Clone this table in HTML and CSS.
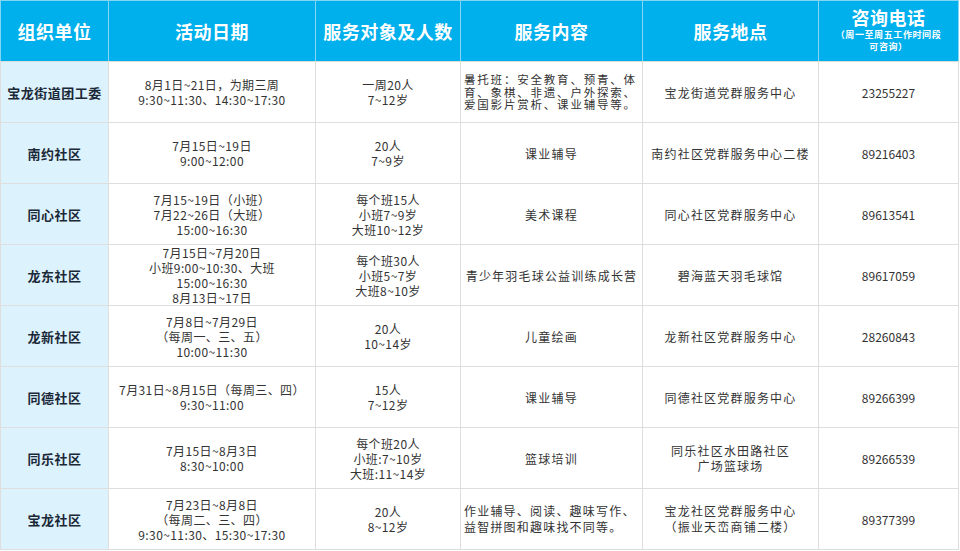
FILE: index.html
```html
<!DOCTYPE html>
<html lang="zh-CN">
<head>
<meta charset="utf-8">
<title>暑期活动</title>
<link rel="stylesheet" href="styles.css">
</head>
<body>
<table class="sched">
  <colgroup>
    <col class="c1"><col class="c2"><col class="c3"><col class="c4"><col class="c5"><col class="c6">
  </colgroup>
  <thead>
    <tr>
      <th>组织单位</th>
      <th>活动日期</th>
      <th>服务对象及人数</th>
      <th>服务内容</th>
      <th>服务地点</th>
      <th class="phone-h"><span class="ph-title">咨询电话</span><span class="ph-sub">（周一至周五工作时间段</span><span class="ph-sub">可咨询）</span></th>
    </tr>
  </thead>
  <tbody>
    <tr>
      <td class="org">宝龙街道团工委</td>
      <td class="dt"><span class="ln">8月1日~21日，为期三周</span><span class="ln">9:30~11:30、14:30~17:30</span></td>
      <td class="dt"><span class="ln">一周20人</span><span class="ln">7~12岁</span></td>
      <td class="left tight"><span class="ln">暑托班：安全教育、预青、体</span><span class="ln">育、象棋、非遗、户外探索、</span><span class="ln">爱国影片赏析、课业辅导等。</span></td>
      <td class="sp">宝龙街道党群服务中心</td>
      <td>23255227</td>
    </tr>
    <tr>
      <td class="org">南约社区</td>
      <td class="dt"><span class="ln">7月15日~19日</span><span class="ln">9:00~12:00</span></td>
      <td class="dt"><span class="ln">20人</span><span class="ln">7~9岁</span></td>
      <td class="sp">课业辅导</td>
      <td class="sp">南约社区党群服务中心二楼</td>
      <td>89216403</td>
    </tr>
    <tr>
      <td class="org">同心社区</td>
      <td class="dt"><span class="ln">7月15~19日（小班）</span><span class="ln">7月22~26日（大班）</span><span class="ln">15:00~16:30</span></td>
      <td class="dt"><span class="ln">每个班15人</span><span class="ln">小班7~9岁</span><span class="ln">大班10~12岁</span></td>
      <td class="sp">美术课程</td>
      <td class="sp">同心社区党群服务中心</td>
      <td>89613541</td>
    </tr>
    <tr>
      <td class="org">龙东社区</td>
      <td class="dt"><span class="ln">7月15日~7月20日</span><span class="ln">小班9:00~10:30、大班</span><span class="ln">15:00~16:30</span><span class="ln">8月13日~17日</span></td>
      <td class="dt"><span class="ln">每个班30人</span><span class="ln">小班5~7岁</span><span class="ln">大班8~10岁</span></td>
      <td class="sp">青少年羽毛球公益训练成长营</td>
      <td class="sp">碧海蓝天羽毛球馆</td>
      <td>89617059</td>
    </tr>
    <tr>
      <td class="org">龙新社区</td>
      <td class="dt"><span class="ln">7月8日~7月29日</span><span class="ln">（每周一、三、五）</span><span class="ln">10:00~11:30</span></td>
      <td class="dt"><span class="ln">20人</span><span class="ln">10~14岁</span></td>
      <td class="sp">儿童绘画</td>
      <td class="sp">龙新社区党群服务中心</td>
      <td>28260843</td>
    </tr>
    <tr>
      <td class="org">同德社区</td>
      <td class="dt"><span class="ln">7月31日~8月15日（每周三、四）</span><span class="ln">9:30~11:00</span></td>
      <td class="dt"><span class="ln">15人</span><span class="ln">7~12岁</span></td>
      <td class="sp">课业辅导</td>
      <td class="sp">同德社区党群服务中心</td>
      <td>89266399</td>
    </tr>
    <tr>
      <td class="org">同乐社区</td>
      <td class="dt"><span class="ln">7月15日~8月3日</span><span class="ln">8:30~10:00</span></td>
      <td class="dt"><span class="ln">每个班20人</span><span class="ln">小班:7~10岁</span><span class="ln">大班:11~14岁</span></td>
      <td class="sp">篮球培训</td>
      <td class="sp"><span class="ln">同乐社区水田路社区</span><span class="ln">广场篮球场</span></td>
      <td>89266539</td>
    </tr>
    <tr>
      <td class="org">宝龙社区</td>
      <td class="dt"><span class="ln">7月23日~8月8日</span><span class="ln">（每周二、三、四）</span><span class="ln">9:30~11:30、15:30~17:30</span></td>
      <td class="dt"><span class="ln">20人</span><span class="ln">8~12岁</span></td>
      <td class="left sp tall"><span class="ln">作业辅导、阅读、趣味写作、</span><span class="ln">益智拼图和趣味找不同等。</span></td>
      <td class="sp tall"><span class="ln">宝龙社区党群服务中心</span><span class="ln">（振业天峦商铺二楼）</span></td>
      <td>89377399</td>
    </tr>
  </tbody>
</table>
</body>
</html>
```

FILE: styles.css
```css
html, body {
  margin: 0;
  padding: 0;
  background: #ffffff;
}

body {
  font-family: "Noto Sans CJK SC", "Noto Sans", sans-serif;
  color: #333333;
}

.sched {
  border-collapse: collapse;
  table-layout: fixed;
  width: 958px;
}

.c1 { width: 108px; }
.c2 { width: 207px; }
.c3 { width: 145px; }
.c4 { width: 182px; }
.c5 { width: 176px; }
.c6 { width: 140px; }

.sched th {
  height: 61px;
  padding: 0;
  background: #00b0ec;
  color: #ffffff;
  font-size: 18px;
  font-weight: 700;
  letter-spacing: 0.5px;
  border: 1px solid #86d6f3;
  border-bottom-color: #dcdcdc;
  text-align: center;
  vertical-align: middle;
  box-sizing: border-box;
}

.phone-h {
  line-height: 1;
}

.ph-title {
  display: block;
  font-size: 18px;
  line-height: 22px;
  margin-top: -3px;
  margin-bottom: 1px;
}

.ph-sub {
  display: block;
  font-size: 9px;
  line-height: 12px;
  letter-spacing: 0.6px;
}

.sched td {
  height: 61px;
  padding: 0 2px;
  box-sizing: border-box;
  border: 1px solid #dedede;
  font-size: 12px;
  line-height: 15px;
  text-align: center;
  vertical-align: middle;
  color: #333333;
  white-space: nowrap;
}

.ln {
  display: block;
  line-height: 15px;
}

.sched td.org {
  background: #dcf2fc;
  font-size: 13px;
  font-weight: 700;
  color: #1b2838;
  letter-spacing: 0.5px;
}

.sched td.dt {
  letter-spacing: 0.4px;
}

.sched td.sp {
  letter-spacing: 1.2px;
}

.sched td.left {
  text-align: left;
  padding-left: 3px;
}

.sched td.tight {
  font-size: 11.5px;
  letter-spacing: 1.8px;
}

.sched td.tight .ln {
  line-height: 12.5px;
}

.sched td.tall .ln {
  line-height: 16px;
}
```
